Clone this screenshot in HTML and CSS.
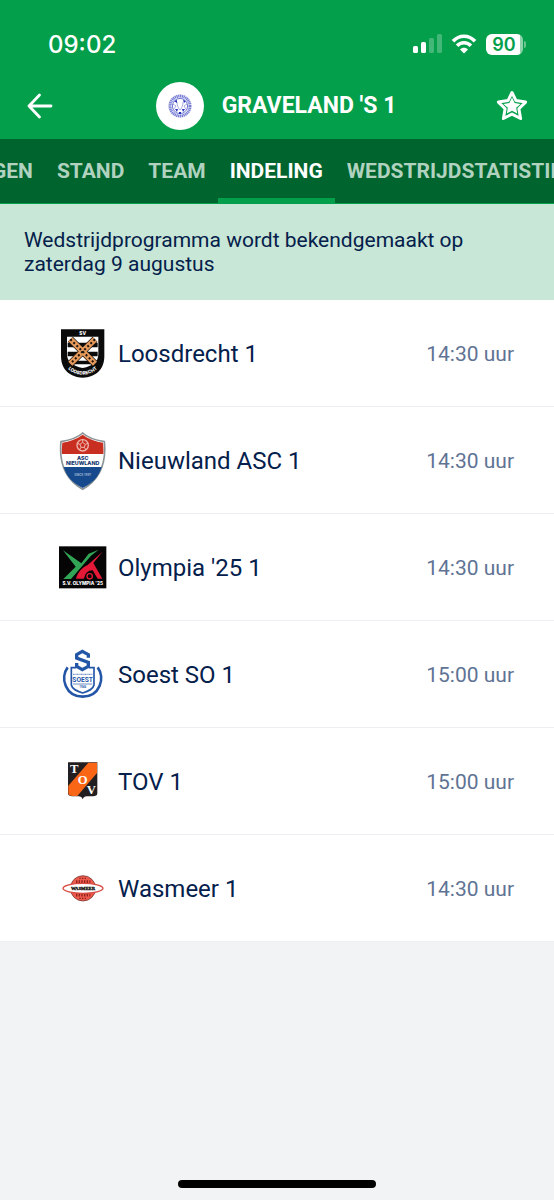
FILE: index.html
```html
<!DOCTYPE html>
<html lang="nl">
<head>
    <meta charset="UTF-8">
    <meta name="viewport" content="width=device-width, initial-scale=1.0">
    <title>Graveland 's 1 - Indeling</title>
    <link rel="stylesheet" href="styles.css">
</head>
<body>
    <div class="statusbar">
        <span class="clock">09:02</span>
        <div class="status-icons">
            <svg width="30" height="20" viewBox="0 0 30 20" fill="#fff">
                <rect x="1" y="12" width="5" height="7" rx="1.5"/>
                <rect x="9" y="8" width="5" height="11" rx="1.5"/>
                <rect x="17" y="4" width="5" height="15" rx="1.5" opacity="0.25"/>
                <rect x="25" y="0" width="5" height="19" rx="1.5" opacity="0.25"/>
            </svg>
            <svg width="26" height="20" viewBox="0 0 26 20" fill="none" stroke="#fff" stroke-width="3.6">
                <path d="M2 7.2C8.200 0.500 17.800 0.500 24 7.200"/>
                <path d="M6.100 11.700C10 7.700 16 7.700 19.900 11.700"/>
                <path d="M13 19.500L9 15.500C11.200 13.300 14.800 13.300 17 15.500Z" fill="#fff" stroke="none"/>
            </svg>
            <div class="battery"><span class="battery-level">90</span></div>
        </div>
    </div>

    <header class="topbar">
        <button class="icon-btn" aria-label="Terug">
            <svg width="32" height="32" viewBox="0 0 32 32" fill="none" stroke="#fff" stroke-width="2.800" stroke-linecap="round" stroke-linejoin="round">
                <path d="M27 16H5M15.500 5L5 16L15.500 27"/>
            </svg>
        </button>
        <div class="team">
            <span class="team-logo">
                <svg width="24" height="24" viewBox="0 0 24 24" fill="none" stroke="#4a52c4">
                    <circle cx="12" cy="12" r="10" stroke-width="3" stroke-dasharray="1.300 0.500" opacity="0.750"/>
                    <circle cx="12" cy="12" r="7.600" stroke-width="0.800"/>
                    <path d="M9 8c0 3 1 6 3 8c2-2 3-5 3-8M5 10l3 2-2 3M19 10l-3 2 2 3" stroke-width="0.800" opacity="0.600"/>
                    <path d="M6 7l3-1v3zM15 6l3 1-2 2zM7 15l3 0-1 3zM14 15l3 0-2 3zM11 18h2v2h-2z" fill="#2530b8" stroke="none"/>
                </svg>
            </span>
            <h1>GRAVELAND 'S 1</h1>
        </div>
        <button class="icon-btn" aria-label="Favoriet">
            <svg width="32" height="32" viewBox="0 0 32 32">
                <path d="M16 2.500L20 10.600L29.600 12.100L22.900 18.700L24.600 28.500L16 24.100L7.400 28.500L9.100 18.700L2.400 12.100L12 10.600Z" fill="none" stroke="#fff" stroke-width="3" stroke-linejoin="round"/>
                <path d="M16 7.600L18.600 13L24.500 13.900L20.200 17.800L21.200 23.500L16 20.800L10.800 23.500L11.800 17.800L7.500 13.900L13.400 13Z" fill="#fff"/>
            </svg>
        </button>
    </header>

    <nav class="tabs" id="tabs">
        <a href="#">UITSLAGEN</a>
        <a href="#">STAND</a>
        <a href="#">TEAM</a>
        <a href="#" class="active" aria-current="page">INDELING</a>
        <a href="#">WEDSTRIJDSTATISTIEKEN</a>
    </nav>

    <main>
        <p class="notice">Wedstrijdprogramma wordt bekendgemaakt op zaterdag 9 augustus</p>

        <ul class="clubs">
            <li>
                <svg class="crest" viewBox="42 26 144 180">
                    <path d="M48 42H178V122C178 164 150 186 113 187C76 186 48 164 48 122Z" fill="#0b0b0b"/>
                    <path d="M66 64H160V116C160 140 143 152 113 158C83 152 66 140 66 116Z" fill="#fff"/>
                    <path d="M68 82H158V96H68ZM68 109H158V123H68ZM73 136H153L143 147H83Z" fill="#0b0b0b"/>
                    <path d="M76 72L150 145M150 72L76 145" stroke="#1b120c" stroke-width="21"/>
                    <path d="M76 72L150 145M150 72L76 145" stroke="#e59a5c" stroke-width="17"/>
                    <path d="M76 72L150 145M150 72L76 145" stroke="#1b120c" stroke-width="6" stroke-dasharray="6 7"/>
                    <text x="113" y="59" font-size="14" class="crest-text" fill="#fff">SV</text>
                    <path id="arcLoosdrecht" d="M62 150C82 187 144 187 164 150" fill="none"/>
                    <text font-size="14" class="crest-text" fill="#fff"><textPath href="#arcLoosdrecht" startOffset="50%">LOOSDRECHT</textPath></text>
                </svg>
                <span class="name">Loosdrecht 1</span>
                <time class="time">14:30 uur</time>
            </li>
            <li>
                <svg class="crest" viewBox="42 32 144 180">
                    <path d="M113 38C128 52 154 60 178 64C184 124 168 176 113 207C58 176 42 124 48 64C72 60 98 52 113 38Z" fill="#fff" stroke="#8b9397" stroke-width="5"/>
                    <path d="M113 43C130 56 154 64 174 67C175 78 176 90 175 101H51C50 90 51 78 52 67C72 64 96 56 113 43Z" fill="#c92f20"/>
                    <path d="M56 140H170C161 170 143 188 113 203C83 188 65 170 56 140Z" fill="#164a8c"/>
                    <circle cx="113" cy="75" r="17" fill="none" stroke="#f0b5ad" stroke-width="4"/>
                    <path d="M113 66L121 72L118 81H108L105 72ZM113 66V58M121 72L129 69M118 81L123 89M108 81L103 89M105 72L97 69" fill="none" stroke="#f0b5ad" stroke-width="3"/>
                    <text x="113" y="119" font-size="16" class="crest-text" fill="#17366f">ASC</text>
                    <text x="113" y="135" font-size="16" class="crest-text" fill="#17366f">NIEUWLAND</text>
                    <text x="113" y="168" font-size="9" class="crest-text" fill="#8fa9cb">SINCE 1997</text>
                </svg>
                <span class="name">Nieuwland ASC 1</span>
                <time class="time">14:30 uur</time>
            </li>
            <li>
                <svg class="crest" viewBox="42 23 144 180">
                    <rect x="42" y="48" width="142" height="126" fill="#050505"/>
                    <path d="M54 60L109 99L131 70L161 58L138 76L78 146H55L92 109Z" fill="#31a455"/>
                    <path d="M173 64L145 98L172 145H158L143 120C128 120 121 129 117 145H93C99 124 111 112 128 104Z" fill="#e31937"/>
                    <circle cx="134" cy="138" r="8" fill="#050505" stroke="#e31937" stroke-width="4"/>
                    <text x="113" y="165" font-size="14" class="crest-text" fill="#fff">S.V. OLYMPIA '25</text>
                </svg>
                <span class="name">Olympia '25 1</span>
                <time class="time">14:30 uur</time>
            </li>
            <li>
                <svg class="crest" viewBox="42 29 144 180" fill="none" stroke="#2456a8">
                    <path d="M130 67V58L112 48L95 58V68L130 81V93L112 103L95 93V83" stroke-width="10"/>
                    <path d="M68 96C44 128 62 184 113 184C164 184 182 128 158 96" stroke-width="8"/>
                    <path d="M94 97H79V149C82 163 96 168 113 173C130 168 144 163 147 149V97H131" stroke-width="5"/>
                    <path d="M84 117H142" stroke-width="4" stroke-dasharray="3 1" opacity="0.600"/>
                    <path d="M84 146H142" stroke-width="2"/>
                    <text x="113" y="140" font-size="20" class="crest-narrow" fill="#2456a8" stroke="none">SOEST</text>
                    <text x="113" y="157" font-size="9" class="crest-narrow" fill="#2456a8" stroke="none">1946</text>
                </svg>
                <span class="name">Soest SO 1</span>
                <time class="time">15:00 uur</time>
            </li>
            <li>
                <svg class="crest" viewBox="42 35 144 180">
                    <path d="M69 66H157V159C157 166 151 168 145 168H125C119 168 116 170 113 177C110 170 107 168 101 168H81C75 168 69 166 69 159Z" fill="#231f20"/>
                    <path d="M130 67H156V98L97 167H82C76 167 70 165 70 158V136Z" fill="#f96616"/>
                    <g class="crest-serif" fill="#fff" font-size="38">
                        <text x="88" y="98">T</text>
                        <text x="113" y="130">O</text>
                        <text x="139" y="162">V</text>
                    </g>
                </svg>
                <span class="name">TOV 1</span>
                <time class="time">15:00 uur</time>
            </li>
            <li>
                <svg class="crest" viewBox="42 26 144 180">
                    <circle cx="114" cy="114" r="38" fill="#ee5b4c" stroke="#5a2320" stroke-width="2"/>
                    <path d="M93 94H136M93 134H136" stroke="#8d221d" stroke-width="9" stroke-dasharray="4 4"/>
                    <path d="M103 84H126M103 144H126" stroke="#8d221d" stroke-width="4" stroke-dasharray="4 4"/>
                    <ellipse cx="114" cy="114" rx="60" ry="15" fill="#fff" stroke="#d8493f" stroke-width="4"/>
                    <text x="114" y="119" font-size="14" class="crest-serif" fill="#111" stroke="#111" stroke-width="1">WASMEER</text>
                </svg>
                <span class="name">Wasmeer 1</span>
                <time class="time">14:30 uur</time>
            </li>
        </ul>
    </main>

    <div class="home-indicator"></div>

    <script>
        // keep the active tab in the middle of the tab strip
        const tabs = document.getElementById('tabs');
        const active = tabs.querySelector('.active');
        tabs.scrollLeft = active.offsetLeft + active.offsetWidth / 2 - tabs.clientWidth / 2;
    </script>
</body>
</html>
```
FILE: styles.css
```css
* {
    box-sizing: border-box;
}
body {
    display: flex;
    flex-direction: column;
    min-height: 100vh;
    margin: 0;
    font-family: Roboto, sans-serif;
    color: #04204b;
    background-color: #f2f3f5;
}
.statusbar {
    display: flex;
    justify-content: space-between;
    align-items: center;
    height: 72px;
    padding: 16px 31px 0 48px;
    background-color: #039f4b;
    color: #fff;
}
.clock {
    font-family: Inter, sans-serif;
    font-size: 24px;
    font-weight: 500;
}
.status-icons {
    display: flex;
    align-items: center;
    gap: 9px;
}
.battery {
    position: relative;
    width: 37px;
    height: 21px;
    border-radius: 6px;
    background: linear-gradient(to right, #fff 34px, #8fd3ad 34px);
}
.battery::after {
    content: "";
    position: absolute;
    right: -3px;
    top: 7px;
    width: 2px;
    height: 7px;
    border-radius: 0 2px 2px 0;
    background-color: #6cc492;
}
.battery-level {
    display: block;
    width: 36px;
    font-family: Inter, sans-serif;
    font-size: 18px;
    font-weight: 600;
    line-height: 21px;
    text-align: center;
    color: #039f4b;
}
.topbar {
    display: flex;
    justify-content: space-between;
    align-items: center;
    height: 67px;
    padding: 0 26px 0 24px;
    background-color: #039f4b;
    color: #fff;
}
.icon-btn {
    display: flex;
    padding: 0;
    border: none;
    background: none;
    cursor: pointer;
}
.team {
    display: flex;
    align-items: center;
    gap: 18px;
}
.team-logo {
    display: flex;
    align-items: center;
    justify-content: center;
    width: 48px;
    height: 48px;
    border-radius: 50%;
    background-color: #fff;
}
.team h1 {
    margin: 0;
    font-size: 23px;
    font-weight: 700;
    line-height: 28px;
}
.tabs {
    position: relative;
    display: flex;
    flex-shrink: 0;
    height: 65px;
    overflow-x: auto;
    scrollbar-width: none;
    background-color: #00642e;
    box-shadow: inset 0 -1px #039f4b;
}
.tabs a {
    padding: 0 12px;
    border-bottom: 6px solid transparent;
    font-size: 21px;
    font-weight: 700;
    line-height: 65px;
    white-space: nowrap;
    text-decoration: none;
    color: #b0d2bf;
}
.tabs a.active {
    border-bottom-color: #039f4b;
    color: #fff;
}
.notice {
    margin: 0;
    padding: 24px;
    font-size: 21px;
    line-height: 24px;
    background-color: #c9e7d7;
}
.clubs {
    margin: 0;
    padding: 0;
    list-style: none;
}
.clubs li {
    display: flex;
    align-items: center;
    height: 107px;
    padding: 2px 40px 0 59px;
    border-bottom: 1px solid #eceef1;
    background-color: #fff;
}
.crest {
    width: 48px;
    height: 60px;
    margin-right: 11px;
}
.crest-text {
    font-family: Inter, sans-serif;
    font-weight: 800;
    text-anchor: middle;
}
.crest-narrow {
    font-family: Roboto, sans-serif;
    font-weight: 700;
    text-anchor: middle;
}
.crest-serif {
    font-family: "Liberation Serif", serif;
    font-weight: 700;
    text-anchor: middle;
}
.name {
    flex: 1;
    font-size: 24px;
}
.time {
    font-size: 21px;
    color: #5f7394;
}
.home-indicator {
    width: 198px;
    height: 8px;
    margin: auto auto 12px;
    border-radius: 4px;
    background-color: #000;
}
```
